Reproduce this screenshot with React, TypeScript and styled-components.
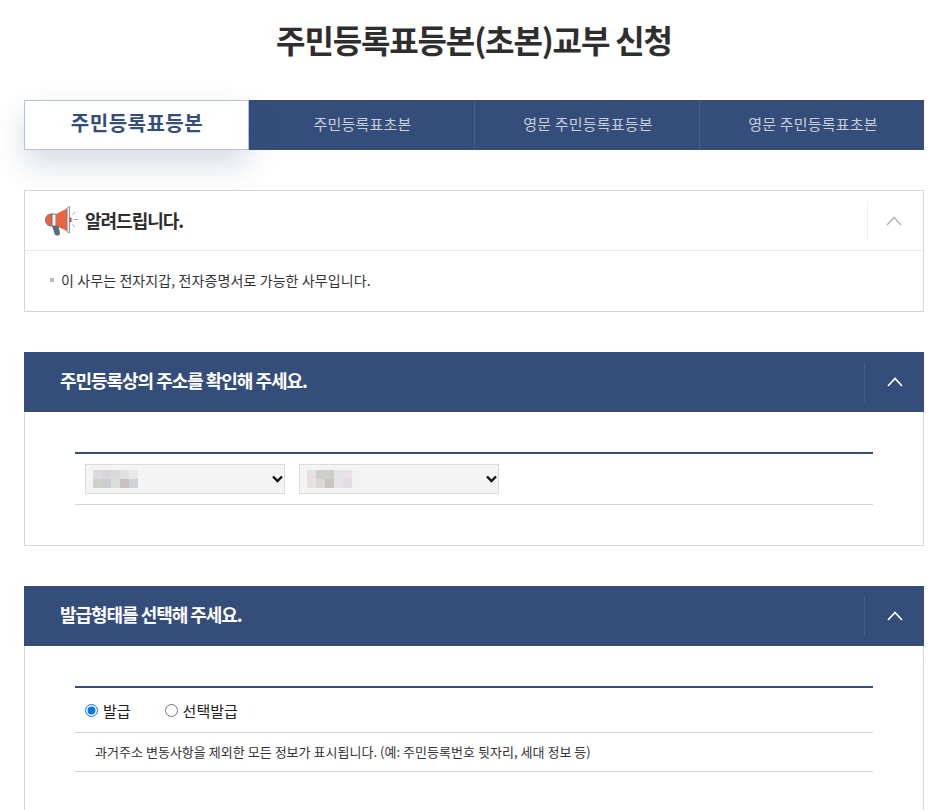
import React from "react";
import styled, { createGlobalStyle } from "styled-components";

const Global = createGlobalStyle`
  html, body { margin: 0; padding: 0; background: #fff; overflow: hidden; height: 810px; }
  * { box-sizing: border-box; }
  body { font-family: "Noto Sans CJK KR", "Noto Sans", sans-serif; color: #333; }
`;

const Page = styled.main`
  width: 930px;
  padding: 0 6px 0 24px;
`;
const Title = styled.h1`
  margin: 0;
  height: 100px;
  padding-top: 14px;
  font-size: 32px;
  line-height: 50px;
  font-weight: 700;
  letter-spacing: -1.15px;
  text-align: center;
  color: #2e2e2e;
`;
const Tabs = styled.nav`
  display: grid;
  grid-template-columns: 225px 226px 225px 224px;
  height: 50px;
  background: #344d7a;
`;
const Tab = styled.a<{ $active?: boolean; $last?: boolean }>`
  display: flex;
  align-items: center;
  justify-content: center;
  padding: ${p => (p.$active ? "0 0 5px 1px" : "0 0 4px 2px")};
  font-size: ${p => (p.$active ? "20px" : "15px")};
  font-weight: ${p => (p.$active ? 700 : 400)};
  letter-spacing: ${p => (p.$active ? "0.5px" : "0.2px")};
  color: ${p => (p.$active ? "#344d7a" : "#c6cedd")};
  background: ${p => (p.$active ? "#fff" : "transparent")};
  border: ${p => (p.$active ? "1px solid #b4c1dc" : "none")};
  border-right: ${p => (p.$active ? "1px solid #b4c1dc" : p.$last ? "none" : "1px solid #465e8a")};
  box-shadow: ${p => (p.$active ? "0 14px 30px rgba(52, 77, 122, 0.2)" : "none")};
  position: relative;
`;
const Notice = styled.section`
  margin-top: 40px;
  height: 122px;
  border: 1px solid #d5d5d5;
`;
const NoticeHead = styled.div`
  display: flex;
  align-items: center;
  height: 60px;
  padding: 0 4px 0 20px;
  border-bottom: 1px solid #eaeaea;
`;
const NoticeTitle = styled.h2`
  margin: 0 0 0 6px;
  padding-bottom: 2px;
  flex: 1;
  font-size: 18px;
  font-weight: 700;
  letter-spacing: -1px;
  color: #2e2e2e;
`;
const Toggle = styled.span<{ $dark?: boolean }>`
  display: flex;
  align-items: center;
  justify-content: center;
  height: 40px;
  width: ${p => (p.$dark ? "60px" : "52px")};
  flex: none;
  color: ${p => (p.$dark ? "#fff" : "#a9b0b8")};
  border-left: 1px solid ${p => (p.$dark ? "#465e8a" : "#eeeeee")};
`;
const NoticeBody = styled.p`
  position: relative;
  display: flex;
  align-items: center;
  margin: 0;
  height: 60px;
  padding-left: 25px;
  padding-bottom: 2px;
  font-size: 14px;
  letter-spacing: 0.1px;
  color: #333;
  &::before {
    content: "";
    width: 4px;
    height: 4px;
    background: #bbb;
    margin-right: 7px;
  }
`;
const Panel = styled.section<{ $height?: number }>`
  margin-top: 40px;
  border: 1px solid #d5d5d5;
  border-top: none;
  min-height: ${p => p.$height ?? 194}px;
`;
const PanelHead = styled.div`
  display: flex;
  align-items: center;
  height: 60px;
  margin: 0 -1px;
  padding-left: 36px;
  background: #344d7a;
`;
const PanelTitle = styled.h2`
  margin: 0;
  padding-bottom: 4px;
  flex: 1;
  font-size: 18px;
  font-weight: 700;
  letter-spacing: -1.04px;
  color: #fff;
`;
const PanelBody = styled.div`
  padding: 40px 50px;
`;
const FormTable = styled.div`
  border-top: 2px solid #344d7a;
`;
const Row = styled.div<{ $height: number }>`
  display: flex;
  align-items: center;
  height: ${p => p.$height}px;
  border-bottom: 1px solid #d5d5d5;
`;
const SelectRow = styled(Row)`
  gap: 14px;
  padding: 0 10px 0 10px;
`;
const SelectBox = styled.div`
  position: relative;
  display: flex;
  align-items: center;
  justify-content: space-between;
  width: 200px;
  height: 30px;
  padding: 0 1px 0 7px;
  background: #f4f4f4;
  border: 1px solid #dcdcdc;
`;
const RadioRow = styled(Row)`
  padding-left: 10px;
  font-size: 15px;
`;
const RadioLabel = styled.label<{ $gap?: number }>`
  display: flex;
  align-items: center;
  margin-right: ${p => p.$gap ?? 0}px;
  color: #222;
`;
const RadioInput = styled.input`
  width: 13px;
  height: 13px;
  margin: 0 5px 0 0;
`;
const Desc = styled(Row)`
  padding: 0 0 2px 20px;
  font-size: 13px;
  letter-spacing: 0.03px;
  color: #333;
`;

const Chevron = ({ w = 1.3 }: { w?: number }) => (
  <svg width={16} height={10} viewBox="0 0 16 10" fill="none" stroke="currentColor" strokeWidth={w}>
    <path d="M1 9 L8 1.5 L15 9" />
  </svg>
);
const Caret = () => (
  <svg width="11" height="8" viewBox="0 0 11 8" fill="none" stroke="#111" strokeWidth="2.4">
    <path d="M1 1.5 L5.5 6 L10 1.5" />
  </svg>
);
const Megaphone = () => (
  <svg width="34" height="30" viewBox="0 0 34 30">
    <path d="M6 8 C2.5 8 0.5 10.5 0.5 14 C0.5 17.5 2.5 20 6 20 H8 V8Z" fill="#e8653f" stroke="#56657c" strokeWidth="0.7" />
    <path d="M7 8 H11 V20 H7Z" fill="#eef0f4" stroke="#56657c" strokeWidth="0.8" />
    <path d="M11 8 L22 2.5 V25 L11 20Z" fill="#e8653f" />
    <path d="M22 2 L24.5 0.5 V27 L22 25.5Z" fill="#e9ebf1" stroke="#6b778c" strokeWidth="0.7" />
    <path d="M7 20 H13.5 L15 27.5 C15 30 10 30.5 9.5 27.5Z" fill="#5d6b80" />
    <rect x="24.5" y="11.5" width="2" height="4.5" fill="#c94f32" />
    <path d="M27.5 8.5 L30 6 M28.5 13.5 H33 M27.5 18.5 L30 21" stroke="#9aa3b2" strokeWidth="0.9" />
  </svg>
);
const Mosaic = ({ colors, cols }: { colors: string[]; cols: number }) => {
  const rows = Math.ceil(colors.length / cols);
  return (
    <svg width={cols * 9} height={rows * 9} shapeRendering="crispEdges">
      {colors.map((c, i) => (
        <rect key={i} x={(i % cols) * 9} y={Math.floor(i / cols) * 9} width="9" height="9" fill={c} />
      ))}
    </svg>
  );
};

export default function App() {
  return (
    <Page>
      <Global />
      <Title>주민등록표등본(초본)교부 신청</Title>
      <Tabs>
        <Tab $active>주민등록표등본</Tab>
        <Tab>주민등록표초본</Tab>
        <Tab>영문 주민등록표등본</Tab>
        <Tab $last>영문 주민등록표초본</Tab>
      </Tabs>
      <Notice>
        <NoticeHead>
          <Megaphone />
          <NoticeTitle>알려드립니다.</NoticeTitle>
          <Toggle><Chevron /></Toggle>
        </NoticeHead>
        <NoticeBody>이 사무는 전자지갑, 전자증명서로 가능한 사무입니다.</NoticeBody>
      </Notice>
      <Panel>
        <PanelHead>
          <PanelTitle>주민등록상의 주소를 확인해 주세요.</PanelTitle>
          <Toggle $dark><Chevron w={1.7} /></Toggle>
        </PanelHead>
        <PanelBody>
          <FormTable>
            <SelectRow $height={51}>
              <SelectBox>
                <Mosaic cols={5} colors={["#dcdadb", "#d9d4da", "#d9d8d9", "#e0e0de", "#e8e9eb", "#d0d0ca", "#c9cdd1", "#dcdcda", "#c9c3bf", "#cfd2d7"]} />
                <Caret />
              </SelectBox>
              <SelectBox>
                <Mosaic cols={6} colors={["#e6e0e4", "#cccfca", "#cccfca", "#e2e3e8", "#e8e2e7", "#f1f1f1", "#e6e3df", "#d8dad3", "#c9c5c1", "#e3e3e8", "#e2dce3", "#f2f2f2"]} />
                <Caret />
              </SelectBox>
            </SelectRow>
          </FormTable>
        </PanelBody>
      </Panel>
      <Panel $height={300}>
        <PanelHead>
          <PanelTitle>발급형태를 선택해 주세요.</PanelTitle>
          <Toggle $dark><Chevron w={1.7} /></Toggle>
        </PanelHead>
        <PanelBody>
          <FormTable>
            <RadioRow $height={45}>
              <RadioLabel $gap={34}>
                <RadioInput type="radio" name="kind" defaultChecked />발급
              </RadioLabel>
              <RadioLabel>
                <RadioInput type="radio" name="kind" />선택발급
              </RadioLabel>
            </RadioRow>
            <Desc $height={39}>과거주소 변동사항을 제외한 모든 정보가 표시됩니다. (예: 주민등록번호 뒷자리, 세대 정보 등)</Desc>
          </FormTable>
        </PanelBody>
      </Panel>
    </Page>
  );
}
